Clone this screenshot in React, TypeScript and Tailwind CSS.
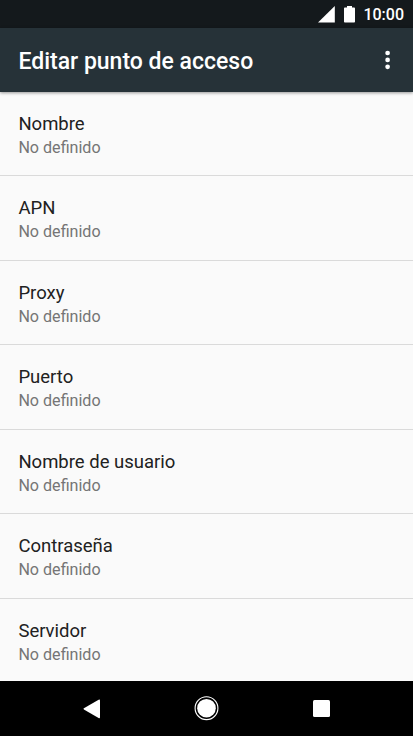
import React from 'react';

const fields = ['Nombre', 'APN', 'Proxy', 'Puerto', 'Nombre de usuario', 'Contraseña', 'Servidor'];

function StatusBar() {
  return (
    <div className="h-[28px] shrink-0 bg-[#14191c] flex items-center justify-end pr-[9px] text-white">
      <svg width="17" height="17" viewBox="0 0 17 17" fill="currentColor" className="mr-[9px]">
        <path d="M0 16.6 16.8 0v16.6z" />
      </svg>
      <svg width="11" height="17" viewBox="0 0 11 17" fill="currentColor" className="mr-[8px]">
        <path d="M3 0h5v1.6h2.2q.8 0 .8.8v13.4q0 .8-.8.8H.8q-.8 0-.8-.8V2.4q0-.8.8-.8H3z" />
      </svg>
      <span className="pt-[2px] text-[16px] leading-none font-medium">10:00</span>
    </div>
  );
}

function AppBar() {
  return (
    <header className="relative z-10 h-[64px] shrink-0 bg-[#263238] flex items-center justify-between pl-[18.4px] pr-[23px] text-white shadow-[0_1px_3px_rgba(0,0,0,0.4)]">
      <h1 className="pt-[2px] text-[23px] font-medium leading-none">Editar punto de acceso</h1>
      <svg width="5" height="20" viewBox="0 0 5 20" fill="currentColor">
        <circle cx="2.6" cy="3" r="2.35" />
        <circle cx="2.6" cy="9.9" r="2.35" />
        <circle cx="2.6" cy="16.8" r="2.35" />
      </svg>
    </header>
  );
}

function FieldRow({ label }: { label: string }) {
  return (
    <li className="h-[84.45px] shrink-0 border-b border-[#dadada] px-[18.4px] pt-[20px]">
      <p className="text-[18.5px] leading-[24px] text-[#212121]">{label}</p>
      <p className="text-[16.1px] leading-[23px] text-[#757575]">No definido</p>
    </li>
  );
}

function NavBar() {
  return (
    <nav className="h-[55px] shrink-0 bg-black flex items-center justify-between pl-[83px] pr-[83px] text-white">
      <svg width="18" height="20" viewBox="0 0 18 20" fill="currentColor">
        <path d="M.9 9.2 15.6.7Q17 0 17 1.4v16.8q0 1.4-1.4.7L.9 10.4Q0 9.8.9 9.2z" />
      </svg>
      <svg width="25" height="25" viewBox="0 0 25 25">
        <circle cx="12.5" cy="12.2" r="11.4" fill="none" stroke="currentColor" strokeWidth="1.1" />
        <circle cx="12.5" cy="12.2" r="9.3" fill="currentColor" />
      </svg>
      <span className="w-[17.5px] h-[17px] bg-white rounded-[1.5px]" />
    </nav>
  );
}

export default function App() {
  return (
    <div className="h-[736px] w-[413px] flex flex-col overflow-hidden bg-[#fafafa] font-['Roboto','Liberation_Sans',sans-serif]">
      <StatusBar />
      <AppBar />
      <ul className="flex-1 min-h-0 overflow-hidden flex flex-col">
        {fields.map((label) => (
          <FieldRow key={label} label={label} />
        ))}
      </ul>
      <NavBar />
    </div>
  );
}
